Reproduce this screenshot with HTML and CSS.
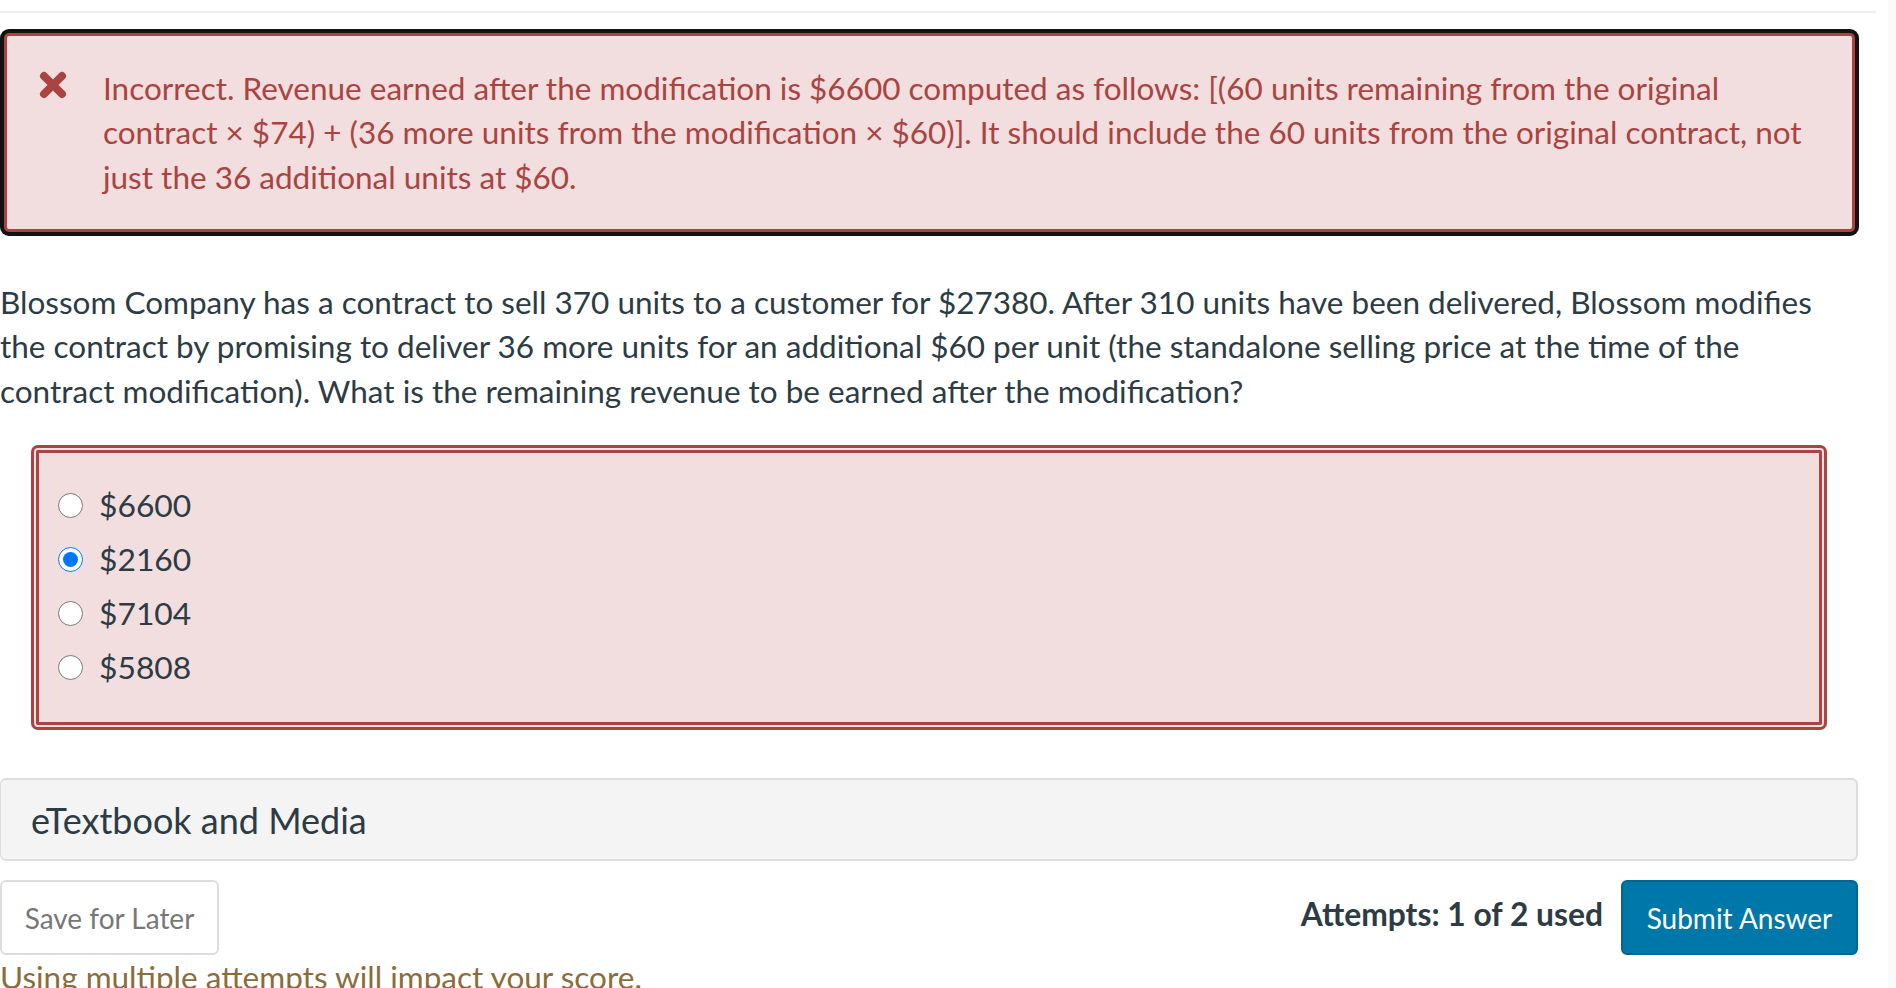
FILE: index.html
```html
<!DOCTYPE html>
<html lang="en">
<head>
<meta charset="utf-8">
<title>Question</title>
<link rel="stylesheet" href="styles.css">
</head>
<body>
<div class="layout">
  <main class="page">
    <hr class="top-rule">
    <div class="content">
      <div class="alert" role="alert">
        <svg class="alert-icon" viewBox="0 0 30 28" aria-hidden="true">
          <path d="M6 5 L24 23 M24 5 L6 23" stroke="#a94442" stroke-width="8" stroke-linecap="round" fill="none"/>
        </svg>
        <p class="alert-text">Incorrect. Revenue earned after the modification is $6600 computed as follows: [(60 units remaining from the original contract × $74) + (36 more units from the modification × $60)]. It should include the 60 units from the original contract, not just the 36 additional units at $60.</p>
      </div>

      <p class="question">Blossom Company has a contract to sell 370 units to a customer for $27380. After 310 units have been delivered, Blossom modifies the contract by promising to deliver 36 more units for an additional $60 per unit (the standalone selling price at the time of the contract modification). What is the remaining revenue to be earned after the modification?</p>

      <fieldset class="options">
        <label class="option"><input type="radio" name="ans"><span>$6600</span></label>
        <label class="option"><input type="radio" name="ans" checked><span>$2160</span></label>
        <label class="option"><input type="radio" name="ans"><span>$7104</span></label>
        <label class="option"><input type="radio" name="ans"><span>$5808</span></label>
      </fieldset>

      <div class="media-bar">eTextbook and Media</div>

      <div class="actions">
        <button class="btn btn-save" type="button">Save for Later</button>
        <div class="actions-right">
          <span class="attempts">Attempts: 1 of 2 used</span>
          <button class="btn btn-submit" type="button">Submit Answer</button>
        </div>
      </div>
      <p class="warning">Using multiple attempts will impact your score.</p>
    </div>
  </main>
  <div class="side-strip"></div>
</div>
</body>
</html>
```

FILE: styles.css
```css
html, body {
  margin: 0;
  padding: 0;
  background: #ffffff;
  height: 100%;
  overflow: hidden;
}

body {
  font-family: Lato, "Open Sans", Arial, sans-serif;
  color: #2d3b45;
}

.layout {
  display: flex;
  height: 100%;
}

.page {
  flex: 1;
  min-width: 0;
}

.side-strip {
  width: 8px;
  background: #fafafa;
}

.top-rule {
  margin: 11px 0 0 0;
  width: 1876px;
  border: 0;
  height: 2px;
  background: #eeeeee;
}

.content {
  width: 1859px;
  padding-top: 20px;
}

.alert {
  margin: 0 4px;
  box-sizing: border-box;
  height: 199px;
  background: #f2dede;
  border: 3px solid #a94442;
  border-radius: 5px;
  box-shadow: 0 0 0 4px #121212;
  display: flex;
  align-items: flex-start;
  padding: 30px 24px 0 31px;
}

.alert-icon {
  width: 30px;
  height: 28px;
  flex: none;
  margin-top: 5px;
  margin-right: 35px;
}

.alert-text {
  margin: 0;
  font-size: 31.5px;
  line-height: 44.4px;
  color: #a94442;
}

.question {
  margin: 48px 0 0 0;
  font-size: 31.5px;
  line-height: 44.4px;
  color: #2d3b45;
}

.options {
  margin: 32px 32px 0 31px;
  padding: 30px 0 33px 19px;
  border: 8px double #a94442;
  border-radius: 7px;
  background: #f2dede;
  display: flex;
  flex-direction: column;
  gap: 10px;
}

.option {
  display: flex;
  align-items: center;
  height: 44px;
  font-size: 31.8px;
  color: #2d3b45;
}

.option input {
  width: 25px;
  height: 25px;
  margin: 0 16px 0 0;
}

.media-bar {
  margin-top: 48px;
  box-sizing: border-box;
  height: 83px;
  margin-right: 1px;
  background: #f4f4f4;
  border: 2px solid #dddddd;
  border-left-width: 1px;
  border-radius: 6px;
  padding-left: 30px;
  display: flex;
  align-items: center;
  font-size: 36px;
  color: #2d3b45;
}

.actions {
  margin-top: 19px;
  display: flex;
  justify-content: space-between;
  align-items: center;
  margin-right: 1px;
}

.actions-right {
  display: flex;
  align-items: center;
  gap: 18px;
}

.btn {
  font-family: Lato, "Open Sans", Arial, sans-serif;
  font-size: 28px;
  height: 75px;
  border-radius: 6px;
  cursor: pointer;
}

.btn-save {
  width: 219px;
  background: #ffffff;
  color: #777777;
  border: 2px solid #dddddd;
  padding: 0;
}

.btn-submit {
  width: 237px;
  background: #0077a9;
  color: #ffffff;
  border: 2px solid #00668f;
  padding: 0;
}

.attempts {
  font-size: 31.8px;
  font-weight: 700;
  color: #2d3b45;
  position: relative;
  top: -4px;
}

.warning {
  margin: 2px 0 0 0;
  font-size: 31.5px;
  line-height: 40px;
  color: #8a6d3b;
}
```
